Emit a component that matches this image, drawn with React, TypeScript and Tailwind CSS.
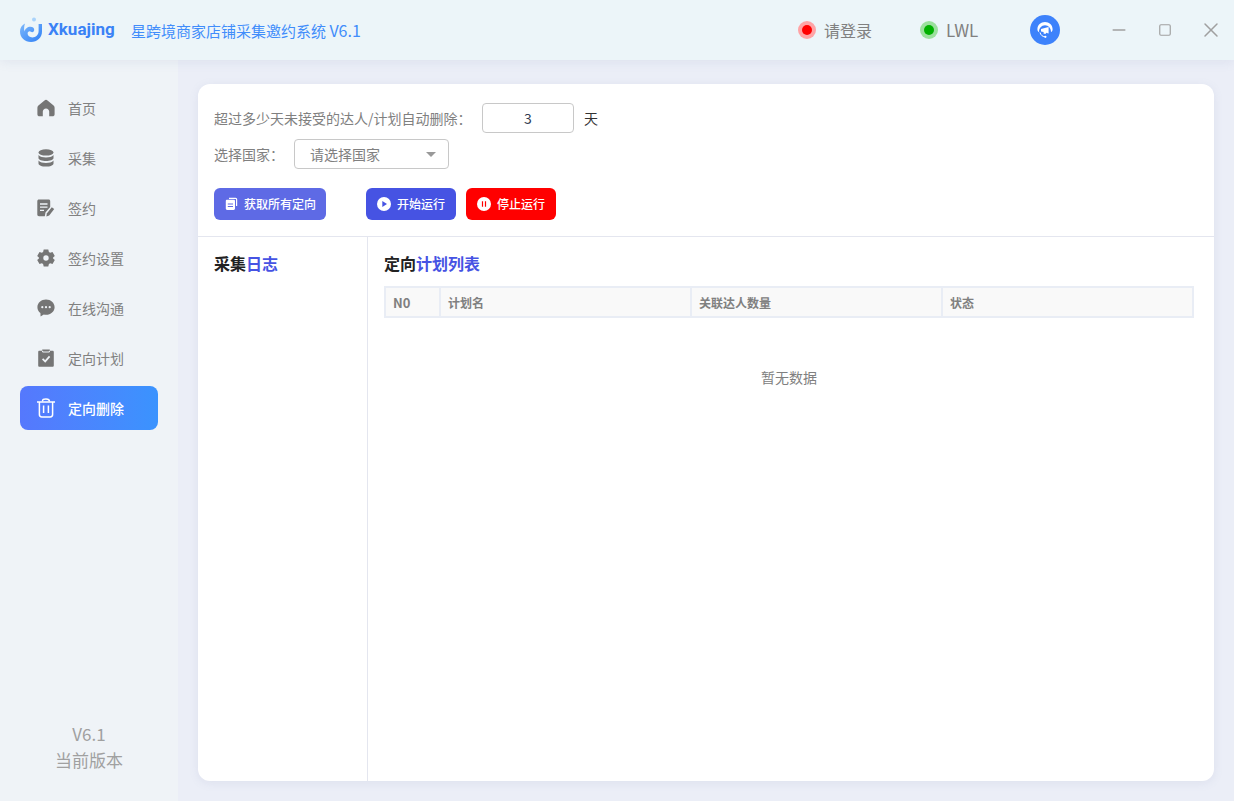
import React from "react";
import { Minus, Square, X } from "lucide-react";

const font = { fontFamily: '"Noto Sans CJK SC", "Noto Sans", sans-serif' };

const Home = () => (
  <svg width="18" height="18" viewBox="0 0 18 18" fill="#757575"><path d="M9 0.8 C9.6 0.8 10 1.1 10.5 1.5 L16.6 6.6 C17.3 7.2 17.6 7.8 17.6 8.7 V15.2 C17.6 16.5 16.7 17.3 15.5 17.3 H12.2 V12.6 C12.2 10.8 10.8 9.4 9 9.4 C7.2 9.4 5.8 10.8 5.8 12.6 V17.3 H2.5 C1.3 17.3 0.4 16.5 0.4 15.2 V8.7 C0.4 7.8 0.7 7.2 1.4 6.6 L7.5 1.5 C8 1.1 8.4 0.8 9 0.8 Z"/></svg>
);
const Db = () => (
  <svg width="16" height="18" viewBox="0 0 16 18" fill="#757575" className="ml-[1px]"><ellipse cx="8" cy="3.4" rx="7.5" ry="3.2"/><path d="M0.5 6 C2 8 5 8.4 8 8.4 C11 8.4 14 8 15.5 6 V9 C15.5 10.8 12 12 8 12 C4 12 0.5 10.8 0.5 9 Z"/><path d="M0.5 11.6 C2 13.6 5 14 8 14 C11 14 14 13.6 15.5 11.6 V14.4 C15.5 16.2 12 17.6 8 17.6 C4 17.6 0.5 16.2 0.5 14.4 Z"/></svg>
);
const Sign = () => (
  <svg width="18" height="18" viewBox="0 0 18 18"><path fill="#757575" d="M2 0.6 H11.5 C12.6 0.6 13.2 1.3 13.2 2.3 V8 L8.5 13.5 L7.8 17.2 H2 C1 17.2 0.3 16.5 0.3 15.5 V2.3 C0.3 1.3 1 0.6 2 0.6 Z"/><path stroke="#eff3f7" strokeWidth="1.3" d="M3 5 H10.5 M3 8.2 H10.5 M3 11.4 H7"/><path fill="#757575" d="M14.8 8.2 L17.2 10 L12.2 16.4 L9.4 17.4 L9.8 14.4 Z"/></svg>
);
const Gear = () => (
  <svg width="18" height="18" viewBox="0 0 18 18"><path fill="#757575" fillRule="evenodd" d="M6.7 0.6 H11.3 L11.9 3 L13.2 3.7 L15.5 3 L17.8 7 L16.1 8.6 V9.4 L17.8 11 L15.5 15 L13.2 14.3 L11.9 15 L11.3 17.4 H6.7 L6.1 15 L4.8 14.3 L2.5 15 L0.2 11 L1.9 9.4 V8.6 L0.2 7 L2.5 3 L4.8 3.7 L6.1 3 Z M9 6.3 A2.7 2.7 0 1 0 9 11.7 A2.7 2.7 0 1 0 9 6.3 Z"/></svg>
);
const Chat = () => (
  <svg width="18" height="18" viewBox="0 0 18 18"><path fill="#757575" d="M9 0.6 C13.8 0.6 17.6 4 17.6 8.2 C17.6 12.4 13.8 15.8 9 15.8 C8.2 15.8 7.5 15.7 6.8 15.6 L3.6 17.6 L3.4 14.1 C1.6 12.7 0.4 10.6 0.4 8.2 C0.4 4 4.2 0.6 9 0.6 Z"/><circle cx="5.3" cy="8.2" r="1.1" fill="#eff3f7"/><circle cx="9" cy="8.2" r="1.1" fill="#eff3f7"/><circle cx="12.7" cy="8.2" r="1.1" fill="#eff3f7"/></svg>
);
const Clip = () => (
  <svg width="16" height="18" viewBox="0 0 16 18" className="ml-[1px]"><path fill="#757575" d="M1.5 1.8 H4.2 V0.4 H11.8 V1.8 H14.5 C15.3 1.8 15.8 2.3 15.8 3.1 V16.4 C15.8 17.2 15.3 17.7 14.5 17.7 H1.5 C0.7 17.7 0.2 17.2 0.2 16.4 V3.1 C0.2 2.3 0.7 1.8 1.5 1.8 Z"/><path stroke="#eff3f7" strokeWidth="1" d="M4.6 1.8 V3 H11.4 V1.8" fill="none"/><path stroke="#eff3f7" strokeWidth="1.7" fill="none" d="M4.6 9.8 L7.2 12.4 L11.6 7.4"/></svg>
);
const Trash = () => (
  <svg width="18" height="20" viewBox="0 0 18 20" fill="none" stroke="#fff" strokeWidth="1.5"><path d="M0 4 H18"/><path d="M5.5 3.6 C5.5 1.5 6.5 0.9 9 0.9 C11.5 0.9 12.5 1.5 12.5 3.6"/><path d="M2.4 4 V16.6 C2.4 18.2 3.3 19 4.8 19 H13.2 C14.7 19 15.6 18.2 15.6 16.6 V4"/><path d="M6.6 7.5 V15 M11.4 7.5 V15"/></svg>
);

const Logo = () => (
  <svg width="22" height="26" viewBox="0 0 22 26">
    <defs>
      <linearGradient id="lg" x1="0" y1="0" x2="1" y2="1">
        <stop offset="0" stopColor="#7db8fb" />
        <stop offset="1" stopColor="#2f80f6" />
      </linearGradient>
    </defs>
    <circle cx="14" cy="2.6" r="2" fill="#a9d3fb" />
    <path fill="url(#lg)" d="M5 6.4 C1.8 8 0 11 0 14.5 C0 20.4 4.8 25 11 25 C17.2 25 22 20.4 22 14.5 V7 H18.6 V14 C18.6 18 15.6 20.4 12.4 20.4 C9.6 20.4 7.6 18.8 7.6 16.6 C7.6 15.2 8.5 14.3 9.6 14.3 C10.8 14.3 11.2 15.2 12.2 15.2 C13.4 15.2 14.2 14.2 14.2 12.8 C14.2 11 12.6 9.8 10.4 9.8 C7.6 9.8 5 11.9 4.4 14.6 C3.8 11.4 4.2 8.6 5 6.4 Z" />
  </svg>
);

const Headset = () => (
  <svg width="18" height="18" viewBox="0 0 18 18">
    <path fill="#fff" d="M9 1 C13.2 1 16.6 4 16.6 8.2 C16.6 9.6 16 10.8 15 10.9 C15 7.2 12.6 4.2 9 4.2 C5.4 4.2 3 7.2 3 10.9 C2 10.8 1.4 9.6 1.4 8.2 C1.4 4 4.8 1 9 1 Z" />
    <path fill="#fff" d="M5 8 L12.6 6 V12.6 L10 11.8 V12.8 H7.6 V11 L5 10.4 Z" />
    <path fill="none" stroke="#fff" strokeWidth="1" d="M4 11.4 C4.6 14 6.4 15.6 9 15.8" />
    <circle cx="9.4" cy="15.8" r="1.1" fill="#fff" />
  </svg>
);

const nav: [React.ReactNode, string][] = [
  [<Home />, "首页"],
  [<Db />, "采集"],
  [<Sign />, "签约"],
  [<Gear />, "签约设置"],
  [<Chat />, "在线沟通"],
  [<Clip />, "定向计划"],
];

export default function App() {
  return (
    <div style={font} className="flex h-[801px] w-[1234px] flex-col overflow-hidden bg-[#ebeef7]">
      <header className="z-10 flex h-[60px] shrink-0 items-center bg-[#ecf5f9] pl-[20px] shadow-[0_2px_10px_rgba(120,140,180,0.12)]">
        <Logo />
        <span className="ml-[6px] w-[83px] font-['Roboto',sans-serif] text-[17px] font-bold text-[#3a82f6]">Xkuajing</span>
        <span className="text-[15px] whitespace-nowrap text-[#418dfb]">星跨境商家店铺采集邀约系统 <span className="text-[16px]">V6.1</span></span>
        <div className="ml-auto flex items-center pr-[11px]">
          <span className="flex h-[18px] w-[18px] items-center justify-center rounded-full bg-[#ffa3a5]">
            <span className="h-[10px] w-[10px] rounded-full bg-[#ff0000]" />
          </span>
          <span className="ml-[8px] w-[48px] text-[16px] text-[#808080]">请登录</span>
          <span className="ml-[48px] flex h-[18px] w-[18px] items-center justify-center rounded-full bg-[#9be09d]">
            <span className="h-[10px] w-[10px] rounded-full bg-[#00b000]" />
          </span>
          <span className="ml-[8px] w-[32px] text-[17px] whitespace-nowrap text-[#808080]">LWL</span>
          <span className="ml-[52px] flex h-[30px] w-[30px] items-center justify-center rounded-full bg-[#3d82fb]">
            <Headset />
          </span>
          <Minus size={20} strokeWidth={1.8} color="#a0a0a0" className="ml-[49px]" />
          <Square size={14} strokeWidth={2} color="#a0a0a0" className="ml-[29px]" />
          <X size={24} strokeWidth={1.5} color="#a0a0a0" className="ml-[27px]" />
        </div>
      </header>

      <div className="flex min-h-0 flex-1">
        <aside className="flex w-[178px] shrink-0 flex-col bg-[#eff3f7] pt-[26px] pb-[28px]">
          <nav className="flex flex-col gap-[6px] px-[20px]">
            {nav.map(([icon, label]) => (
              <div key={label} className="flex h-[44px] items-center text-[14px] text-[#808080]">
                <span className="flex w-[48px] items-center pl-[17px]">{icon}</span>
                {label}
              </div>
            ))}
            <div className="flex h-[44px] items-center rounded-[8px] bg-gradient-to-r from-[#5578fd] to-[#3a93fe] text-[14px] font-medium text-white">
              <span className="flex w-[48px] items-center pl-[17px]"><Trash /></span>
              定向删除
            </div>
          </nav>
          <div className="mt-auto flex flex-col items-center text-[17px] leading-[26px] text-[#a0a0a0]">
            <span>V6.1</span>
            <span>当前版本</span>
          </div>
        </aside>

        <main className="min-w-0 flex-1 px-[20px] pt-[24px] pb-[20px]">
          <div className="flex h-full flex-col rounded-[12px] bg-white shadow-[0_2px_10px_rgba(120,130,170,0.12)]">
            <section className="h-[153px] shrink-0 border-b border-[#e4e6ef] px-[16px] pt-[19px]">
              <div className="flex h-[30px] items-center text-[14px] text-[#808080]">
                <span className="w-[268px] whitespace-nowrap">超过多少天未接受的达人/计划自动删除：</span>
                <span className="flex h-[30px] w-[92px] items-center justify-center rounded-[4px] border border-[#c8c8c8] text-[14px] text-[#303a52]">3</span>
                <span className="ml-[10px] text-[14px] text-[#333]">天</span>
              </div>
              <div className="mt-[6px] flex h-[30px] items-center text-[14px] text-[#808080]">
                <span className="w-[80px]">选择国家：</span>
                <span className="flex h-[30px] w-[155px] items-center rounded-[4px] border border-[#c8c8c8] pr-[12px] pl-[15px]">
                  请选择国家
                  <span className="ml-auto h-0 w-0 border-x-[5px] border-t-[5px] border-x-transparent border-t-[#999]" />
                </span>
              </div>
              <div className="mt-[19px] flex text-[12px] font-medium text-white">
                <button className="flex h-[32px] w-[112px] items-center rounded-[6px] bg-[#5e6ae5] pl-[11px]">
                  <svg width="13" height="14" viewBox="0 0 13 14" className="mr-[6px]"><path fill="#fff" d="M4 0.8 H10.5 C11.6 0.8 12.2 1.5 12.2 2.6 V9 H11 V2 H4 Z" /><path fill="#fff" fillRule="evenodd" d="M2.2 2.8 H8.6 C9.5 2.8 10 3.3 10 4.2 V11.6 C10 12.5 9.5 13 8.6 13 H2.2 C1.3 13 0.8 12.5 0.8 11.6 V4.2 C0.8 3.3 1.3 2.8 2.2 2.8 Z M2.8 6.4 V7.4 H8 V6.4 Z M2.8 9 V10 H8 V9 Z" /></svg>
                  获取所有定向
                </button>
                <button className="ml-[40px] flex h-[32px] w-[90px] items-center rounded-[6px] bg-[#4653e3] pl-[11px]">
                  <svg width="14" height="14" viewBox="0 0 14 14" className="mr-[6px]"><circle cx="7" cy="7" r="7" fill="#fff" /><path fill="#4653e3" d="M5.3 4 L10 7 L5.3 10 Z" /></svg>
                  开始运行
                </button>
                <button className="ml-[10px] flex h-[32px] w-[90px] items-center rounded-[6px] bg-[#ff0000] pl-[11px]">
                  <svg width="14" height="14" viewBox="0 0 14 14" className="mr-[6px]"><circle cx="7" cy="7" r="7" fill="#fff" /><path fill="#ff0000" d="M4.9 4.2 H6.1 V9.8 H4.9 Z M7.9 4.2 H9.1 V9.8 H7.9 Z" /></svg>
                  停止运行
                </button>
              </div>
            </section>

            <section className="flex min-h-0 flex-1">
              <div className="w-[170px] shrink-0 border-r border-[#e4e6ef] pt-[14px] pl-[16px]">
                <h2 className="text-[16px] leading-[24px] font-bold text-[#222]">采集<span className="text-[#4653e3]">日志</span></h2>
              </div>
              <div className="min-w-0 flex-1 pt-[14px] pr-[20px] pl-[16px]">
                <h2 className="text-[16px] leading-[24px] font-bold text-[#222]">定向<span className="text-[#4653e3]">计划列表</span></h2>
                <div className="mt-[11px] grid h-[32px] grid-cols-[55px_251px_251px_1fr] border-2 border-r-0 border-[#e9edf5] bg-[#f9f9f9] text-[12px] font-bold text-[#808080]">
                  <div className="flex items-center border-r-2 border-[#e9edf5] pt-[2px] pl-[7px] text-[13px]">N0</div>
                  <div className="flex items-center border-r-2 border-[#e9edf5] pt-[2px] pl-[7px]">计划名</div>
                  <div className="flex items-center border-r-2 border-[#e9edf5] pt-[2px] pl-[7px]">关联达人数量</div>
                  <div className="flex items-center border-r-2 border-[#e9edf5] pt-[2px] pl-[7px]">状态</div>
                </div>
                <p className="mt-[49px] text-center text-[14px] leading-[20px] text-[#808080]">暂无数据</p>
              </div>
            </section>
          </div>
        </main>
      </div>
    </div>
  );
}
